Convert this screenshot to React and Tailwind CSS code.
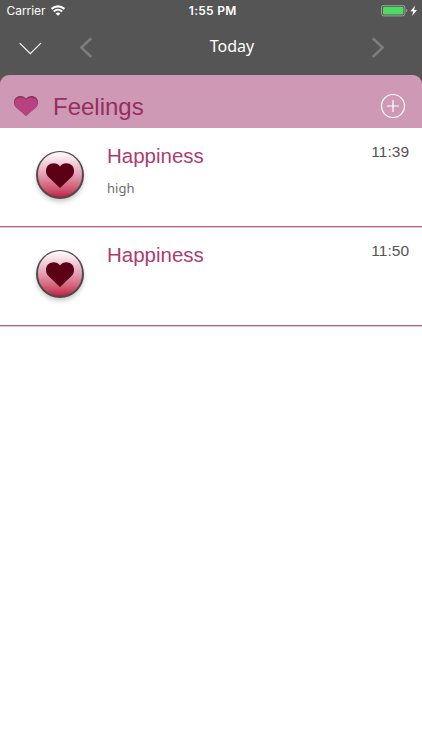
import React from 'react';

const HEART = 'M12 22 L1.9 12.2 C-0.7 9.6 -0.7 4.6 1.9 2 C4.6 -0.7 9.6 -0.6 12 3 C14.4 -0.6 19.4 -0.7 22.1 2 C24.7 4.6 24.7 9.6 22.1 12.2 Z';

const entries = [
    { id: 1, title: 'Happiness', note: 'high', time: '11:39' },
    { id: 2, title: 'Happiness', note: '', time: '11:50' },
];

const StatusBar = () => (
    <div className="grid grid-cols-3 items-center h-[22px] pl-[6.5px] pr-[4px] text-white font-['Inter',sans-serif]">
        <div className="flex items-center gap-[6px]">
            <span className="text-[12px] leading-[22px] tracking-[-0.05px]">Carrier</span>
            <svg width="14" height="11" viewBox="0 0 14 11" fill="none" stroke="#fff" className="-mt-[1px]">
                <path d="M0.6 3.9 C4.2 0.5 9.8 0.5 13.4 3.9" strokeWidth="2.1" />
                <path d="M2.8 6.4 C5.2 4.2 8.8 4.2 11.2 6.4" strokeWidth="2" />
                <path d="M7 10.8 L4.6 8.4 C6 7.1 8 7.1 9.4 8.4 Z" fill="#fff" stroke="none" />
            </svg>
        </div>
        <span className="pl-[1px] text-center text-[12px] leading-[22px] font-semibold tracking-[0.3px]">1:55 PM</span>
        <div className="flex items-center justify-end">
            <svg width="37" height="12" viewBox="0 0 37 12">
                <rect x="0.5" y="0.3" width="23.4" height="10.6" rx="2.4" fill="none" stroke="#a0a0a0" />
                <rect x="2" y="1.7" width="20.4" height="7.8" rx="1.2" fill="#4cd964" />
                <path d="M25.2 3.8 C26.8 4.4 26.8 6.6 25.2 7.2 Z" fill="#a0a0a0" />
                <path d="M34.2 0.4 L29.4 6.2 L32.3 6.4 L31 11 L36 5 L33 4.8 Z" fill="#fff" />
            </svg>
        </div>
    </div>
);

const NavBar = () => (
    <div className="grid grid-cols-[44px_84px_1fr_84px] h-[50px] pl-[8px] items-center">
        <button className="flex justify-center pt-[3px]">
            <svg width="24" height="14" viewBox="0 0 24 14" fill="none" stroke="#f4f4f4" strokeWidth="1.3">
                <path d="M1.7 1.1 L12.3 11.6 L22.9 1.1" />
            </svg>
        </button>
        <button className="pl-[27px] pt-[1px]">
            <svg width="14" height="22" viewBox="0 0 14 22" fill="none" stroke="#7d7d7d" strokeWidth="2.6">
                <path d="M12.2 1.2 L2.4 10.6 L12.2 20" />
            </svg>
        </button>
        <h1 className="-translate-x-[5px] pb-[2px] text-center text-white text-[16px] leading-[22px] font-['Noto_Sans',sans-serif]">
            Today
        </h1>
        <button className="pl-[33px] pt-[1px]">
            <svg width="14" height="22" viewBox="0 0 14 22" fill="none" stroke="#7d7d7d" strokeWidth="2.6">
                <path d="M1.8 1.2 L11.6 10.6 L1.8 20" />
            </svg>
        </button>
    </div>
);

const SectionHeader = () => (
    <div className="flex items-center h-[53.5px] pt-[8.5px] pl-[14px] pr-[16px] rounded-t-[9px] bg-[#cd99b4]">
        <svg width="24" height="20" viewBox="0 0 24 22" preserveAspectRatio="none">
            <path d={HEART} fill="#8e2c5a" />
            <path d={HEART} fill="#b6437f" transform="translate(0.4 1.6) scale(0.97 0.92)" />
        </svg>
        <h2 className="pl-[15px] pt-[2px] flex-1 text-[24px] leading-[30px] text-[#982d60]">Feelings</h2>
        <button>
            <svg width="26" height="26" viewBox="0 0 26 26" fill="none" stroke="#fff" strokeWidth="1.2">
                <circle cx="13" cy="13" r="11.5" />
                <path d="M13 7 V19 M7 13 H19" />
            </svg>
        </button>
    </div>
);

const HeartBadge = () => (
    <div className="flex items-center justify-center w-[48px] h-[48px] rounded-full bg-[#4f494b] p-[1.6px] shadow-[0_3px_4px_rgba(0,0,0,0.2)]">
        <div className="flex items-center justify-center w-full h-full rounded-full bg-linear-to-b from-[#fdf5f8] from-5% via-[#e2a0b6] via-50% to-[#c01c48]">
            <svg className="mt-[2px]" width="28" height="25" viewBox="0 0 24 22" preserveAspectRatio="none">
                <path d={HEART} fill="#5c0015" />
            </svg>
        </div>
    </div>
);

const Entry = ({ title, note, time }) => (
    <li className="flex h-[99px] pl-[36px] pr-[13px] border-b border-[#b4658a] shadow-[0_1px_0_#e6c3d2]">
        <div className="pt-[22.5px]">
            <HeartBadge />
        </div>
        <div className="flex-1 pl-[23px] pt-[14px]">
            <h3 className="text-[20.5px] leading-[28px] text-[#ac3c72]">{title}</h3>
            {note && (
                <p className="mt-[8px] text-[13px] leading-[20px] text-[#6e6e6e] font-['Noto_Sans',sans-serif]">{note}</p>
            )}
        </div>
        <span className="pt-[14px] text-[15.5px] leading-[20px] text-[#545454]">{time}</span>
    </li>
);

const App = () => {
    return (
        <div className="min-h-screen bg-white font-['Liberation_Sans',sans-serif]">
            <div className="bg-[#555555]">
                <StatusBar />
                <NavBar />
                <div className="pt-[2.5px]">
                    <SectionHeader />
                </div>
            </div>
            <ul>
                {entries.map((entry) => (
                    <Entry key={entry.id} title={entry.title} note={entry.note} time={entry.time} />
                ))}
            </ul>
        </div>
    );
};

export default App;
